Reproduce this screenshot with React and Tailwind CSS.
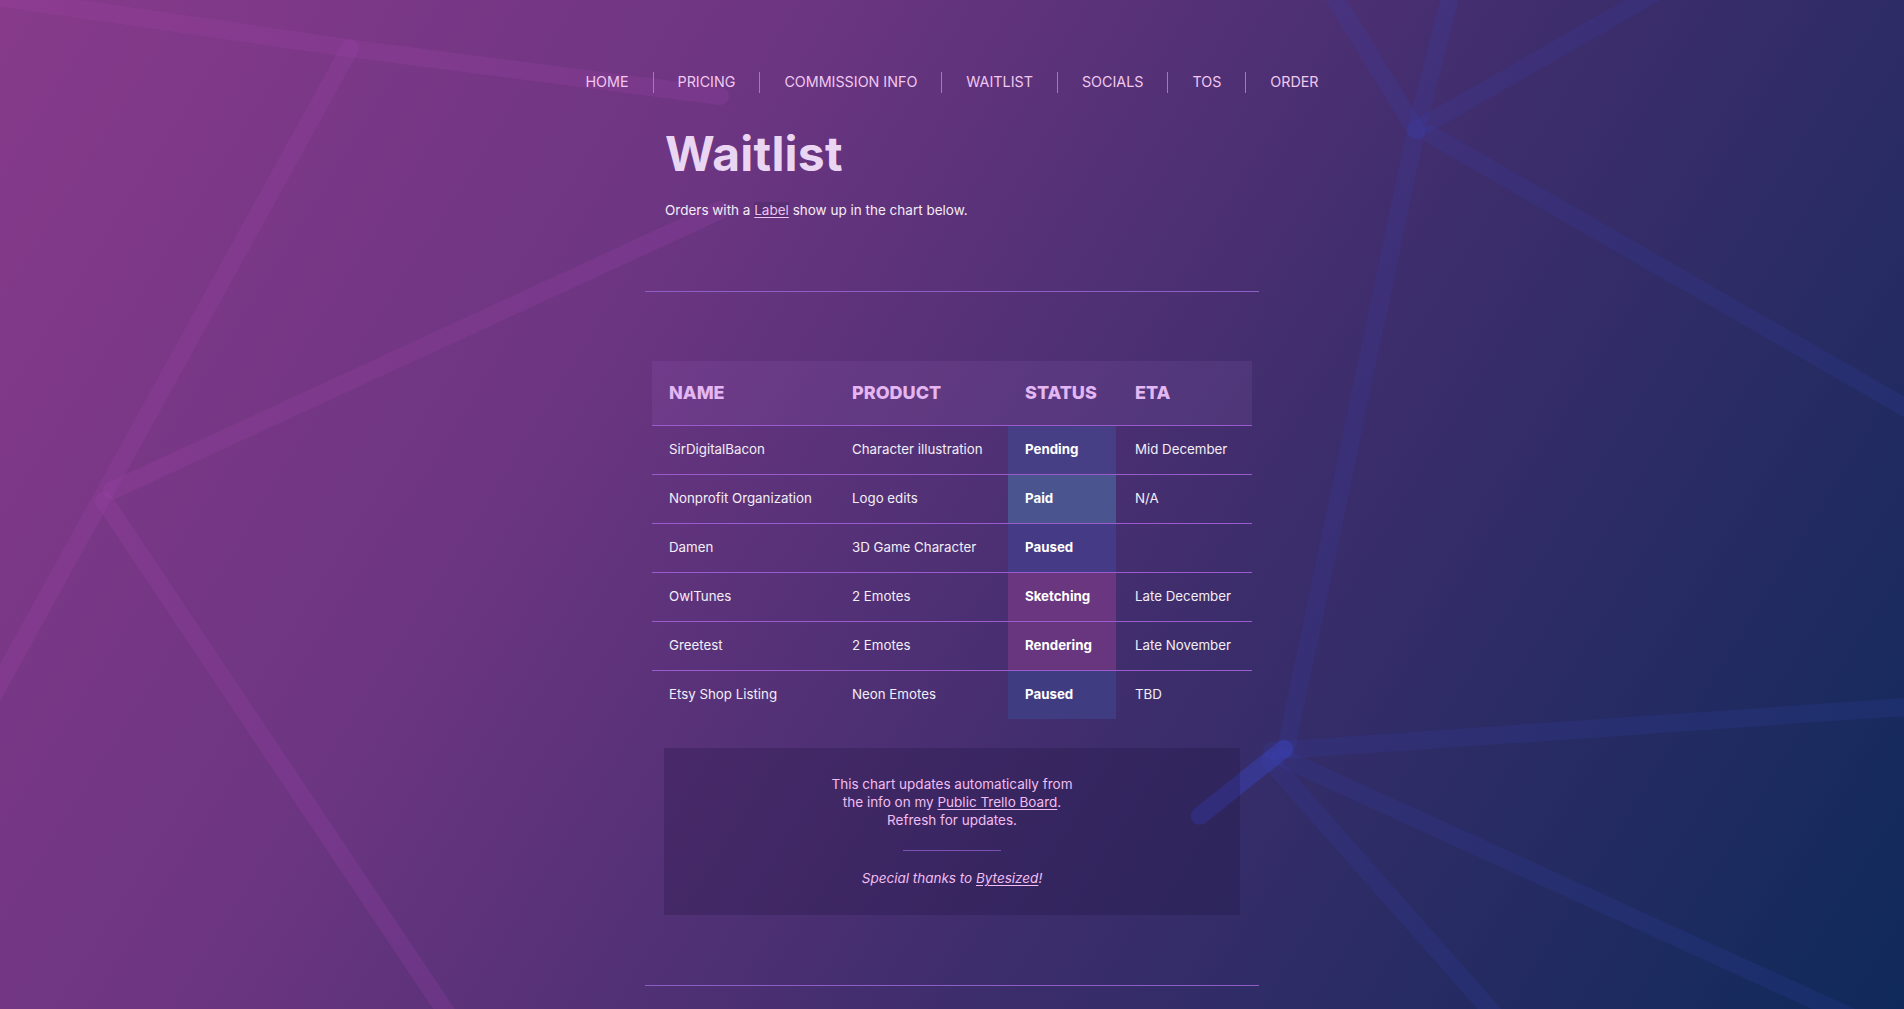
import React from 'react';

const navItems = ['HOME', 'PRICING', 'COMMISSION INFO', 'WAITLIST', 'SOCIALS', 'TOS', 'ORDER'];

const orders = [
  { name: 'SirDigitalBacon', product: 'Character illustration', status: 'Pending', eta: 'Mid December', tone: 'bg-[#473f86]' },
  { name: 'Nonprofit Organization', product: 'Logo edits', status: 'Paid', eta: 'N/A', tone: 'bg-[#4a5590]' },
  { name: 'Damen', product: '3D Game Character', status: 'Paused', eta: '', tone: 'bg-[#443a85]' },
  { name: 'OwlTunes', product: '2 Emotes', status: 'Sketching', eta: 'Late December', tone: 'bg-[#6a3680]' },
  { name: 'Greetest', product: '2 Emotes', status: 'Rendering', eta: 'Late November', tone: 'bg-[#67367f]' },
  { name: 'Etsy Shop Listing', product: 'Neon Emotes', status: 'Paused', eta: 'TBD', tone: 'bg-[#403c81]' },
];

// faint geometric strokes behind the page
const BackgroundLines = () => (
  <svg
    className="pointer-events-none absolute inset-0 h-full w-full"
    viewBox="0 0 1904 1009"
    preserveAspectRatio="none"
  >
    <g fill="none" strokeWidth="18" strokeLinecap="round">
      <g stroke="#a446b0" strokeOpacity="0.2">
        <polyline points="-10,-4 348,48 720,96" />
        <line x1="350" y1="48" x2="-10" y2="700" />
        <line x1="112" y1="490" x2="720" y2="210" />
        <line x1="104" y1="500" x2="452" y2="1020" />
      </g>
      <g stroke="#3a42b8" strokeOpacity="0.16">
        <polyline points="1452,-10 1416,130 1286,748" />
        <line x1="1416" y1="130" x2="1660" y2="-10" />
        <line x1="1430" y1="134" x2="1910" y2="410" />
        <line x1="1330" y1="-10" x2="1416" y2="130" />
        <line x1="1272" y1="750" x2="1910" y2="706" />
        <line x1="1280" y1="756" x2="1860" y2="1020" />
        <line x1="1270" y1="760" x2="1500" y2="1020" />
        <line x1="1284" y1="748" x2="1200" y2="815" strokeOpacity="0.5" />
      </g>
    </g>
  </svg>
);

const App = () => {
  return (
    <div className="relative min-h-screen w-full overflow-hidden bg-[linear-gradient(122deg,#873a8a_0%,#6c3582_32%,#3e2d6c_62%,#0f2a5a_100%)] font-[Inter,sans-serif] text-white">
      <BackgroundLines />

      <div className="relative flex flex-col items-center pt-[72px] pb-[24px]">
        <nav className="flex h-[21px] items-center">
          {navItems.map((item, i) => (
            <a
              key={item}
              href="#"
              className={
                'flex h-full items-center px-[24px] text-[14.3px] leading-none text-[#f1c8f0] ' +
                (i > 0 ? 'border-l border-[#b56ec4]' : '')
              }
            >
              {item}
            </a>
          ))}
        </nav>

        <main className="w-[614px]">
          <h1 className="mt-[37px] pl-[20px] text-[48px] font-bold leading-[48px] tracking-[0.2px] text-[#ead6f2]">
            Waitlist
          </h1>
          <p className="mt-[22px] pl-[20px] text-[13.5px] leading-[20px] text-[#f6ecf6]">
            Orders with a{' '}
            <span className="bg-[#4b2966]/50 text-[#f0c2f0] underline underline-offset-2">Label</span>{' '}
            show up in the chart below.
          </p>

          <div className="mt-[71px] h-px bg-[#8d5ec6]" />

          <table className="mx-auto mt-[69px] w-[600px] table-fixed border-collapse">
            <colgroup>
              <col className="w-[183px]" />
              <col className="w-[173px]" />
              <col className="w-[108px]" />
              <col className="w-[136px]" />
            </colgroup>
            <thead>
              <tr className="h-[64px] border-b border-[#9a5ccc] bg-[#b67be0]/10">
                {['NAME', 'PRODUCT', 'STATUS', 'ETA'].map((h, i) => (
                  <th
                    key={h}
                    className={
                      'text-left text-[18px] font-extrabold text-[#e4b6f2] ' +
                      (i === 3 ? 'pl-[19px]' : 'pl-[17px]')
                    }
                  >
                    {h}
                  </th>
                ))}
              </tr>
            </thead>
            <tbody>
              {orders.map((o, idx) => (
                <tr
                  key={idx}
                  className={
                    'h-[49px] text-[13.3px] text-[#f3eef6] ' +
                    (idx < orders.length - 1 ? 'border-b border-[#9a5ccc]' : '')
                  }
                >
                  <td className="pl-[17px]">{o.name}</td>
                  <td className="pl-[17px] whitespace-nowrap">{o.product}</td>
                  <td className={'pl-[17px] font-bold text-white ' + o.tone}>{o.status}</td>
                  <td className="pl-[19px]">{o.eta}</td>
                </tr>
              ))}
            </tbody>
          </table>

          <div className="mx-auto mt-[29px] w-[576px] bg-[#1a0f3a]/25 pt-[27px] pb-[28px] text-center text-[13.5px] leading-[18px] text-[#f2bdf0]">
            <p>
              This chart updates automatically from
              <br />
              the info on my{' '}
              <a href="#" className="underline underline-offset-2">
                Public Trello Board
              </a>
              .
              <br />
              Refresh for updates.
            </p>
            <div className="mx-auto mt-[21px] h-px w-[98px] bg-[#7c50b4]" />
            <p className="mt-[18px] italic">
              Special thanks to{' '}
              <a href="#" className="underline underline-offset-2">
                Bytesized
              </a>
              !
            </p>
          </div>

          <div className="mt-[70px] h-px bg-[#8d5ec6]" />
        </main>
      </div>
    </div>
  );
};

export default App;
